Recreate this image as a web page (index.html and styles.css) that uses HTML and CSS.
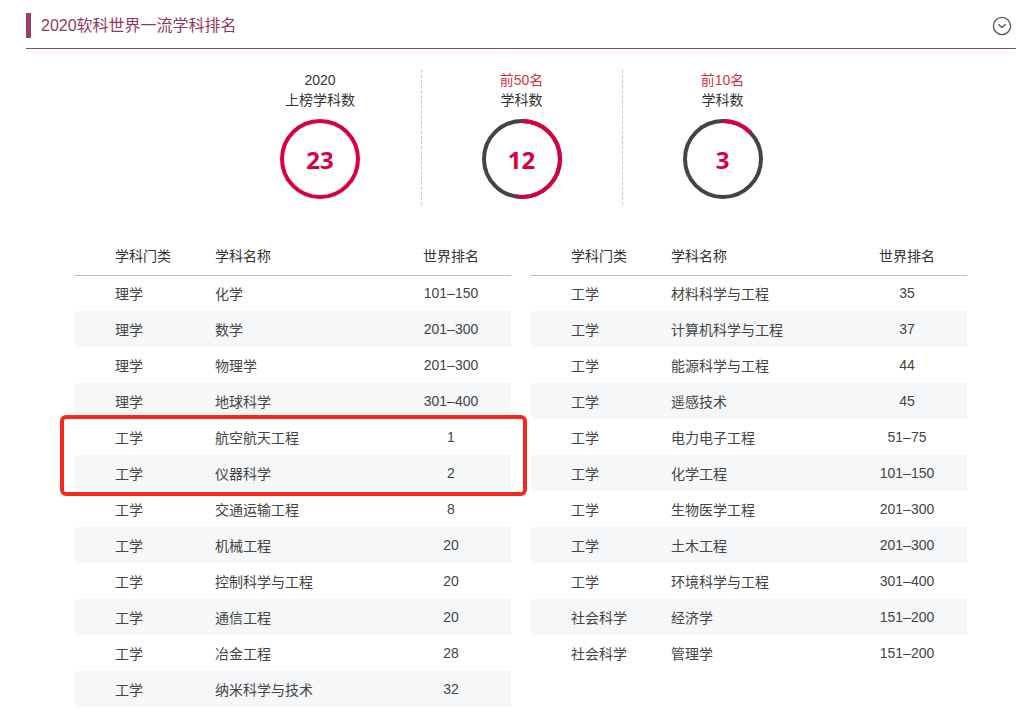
FILE: index.html
```html
<!DOCTYPE html>
<html lang="zh">
<head>
<meta charset="utf-8">
<link rel="stylesheet" href="styles.css">
</head>
<body>
<div class="page">
  <div class="header">
    <span class="bar"></span>
    <h1 class="title">2020软科世界一流学科排名</h1>
    <svg class="toggle" width="20" height="20" viewBox="0 0 20 20"><circle cx="10" cy="10" r="8.6" fill="none" stroke="#555" stroke-width="1.3"/><path d="M6.6 8.6 L10 11.6 L13.4 8.6" fill="none" stroke="#555" stroke-width="1.3" stroke-linecap="round" stroke-linejoin="round"/></svg>
  </div>

  <div class="stats">
    <div class="stat">
      <div class="label">2020</div>
      <div class="label">上榜学科数</div>
      <div class="ring">
        <svg width="80" height="80" viewBox="0 0 80 80"><circle cx="40" cy="40" r="38" fill="none" stroke="#d9003f" stroke-width="4"/></svg>
        <span class="num">23</span>
      </div>
    </div>
    <div class="stat sep">
      <div class="label red">前50名</div>
      <div class="label">学科数</div>
      <div class="ring">
        <svg width="80" height="80" viewBox="0 0 80 80"><circle cx="40" cy="40" r="38" fill="none" stroke="#444" stroke-width="4"/><circle cx="40" cy="40" r="38" fill="none" stroke="#d9003f" stroke-width="4" pathLength="100" stroke-dasharray="52.2 100" transform="rotate(-90 40 40)"/></svg>
        <span class="num">12</span>
      </div>
    </div>
    <div class="stat sep">
      <div class="label red">前10名</div>
      <div class="label">学科数</div>
      <div class="ring">
        <svg width="80" height="80" viewBox="0 0 80 80"><circle cx="40" cy="40" r="38" fill="none" stroke="#444" stroke-width="4"/><circle cx="40" cy="40" r="38" fill="none" stroke="#d9003f" stroke-width="4" pathLength="100" stroke-dasharray="13 100" transform="rotate(-90 40 40)"/></svg>
        <span class="num">3</span>
      </div>
    </div>
  </div>

  <div class="tables">
    <table class="rank">
      <thead><tr><th class="c1">学科门类</th><th class="c2">学科名称</th><th class="c3">世界排名</th></tr></thead>
      <tbody>
        <tr><td class="c1">理学</td><td class="c2">化学</td><td class="c3">101–150</td></tr>
        <tr><td class="c1">理学</td><td class="c2">数学</td><td class="c3">201–300</td></tr>
        <tr><td class="c1">理学</td><td class="c2">物理学</td><td class="c3">201–300</td></tr>
        <tr><td class="c1">理学</td><td class="c2">地球科学</td><td class="c3">301–400</td></tr>
        <tr><td class="c1">工学</td><td class="c2">航空航天工程</td><td class="c3">1</td></tr>
        <tr><td class="c1">工学</td><td class="c2">仪器科学</td><td class="c3">2</td></tr>
        <tr><td class="c1">工学</td><td class="c2">交通运输工程</td><td class="c3">8</td></tr>
        <tr><td class="c1">工学</td><td class="c2">机械工程</td><td class="c3">20</td></tr>
        <tr><td class="c1">工学</td><td class="c2">控制科学与工程</td><td class="c3">20</td></tr>
        <tr><td class="c1">工学</td><td class="c2">通信工程</td><td class="c3">20</td></tr>
        <tr><td class="c1">工学</td><td class="c2">冶金工程</td><td class="c3">28</td></tr>
        <tr><td class="c1">工学</td><td class="c2">纳米科学与技术</td><td class="c3">32</td></tr>
      </tbody>
    </table>
    <table class="rank">
      <thead><tr><th class="c1">学科门类</th><th class="c2">学科名称</th><th class="c3">世界排名</th></tr></thead>
      <tbody>
        <tr><td class="c1">工学</td><td class="c2">材料科学与工程</td><td class="c3">35</td></tr>
        <tr><td class="c1">工学</td><td class="c2">计算机科学与工程</td><td class="c3">37</td></tr>
        <tr><td class="c1">工学</td><td class="c2">能源科学与工程</td><td class="c3">44</td></tr>
        <tr><td class="c1">工学</td><td class="c2">遥感技术</td><td class="c3">45</td></tr>
        <tr><td class="c1">工学</td><td class="c2">电力电子工程</td><td class="c3">51–75</td></tr>
        <tr><td class="c1">工学</td><td class="c2">化学工程</td><td class="c3">101–150</td></tr>
        <tr><td class="c1">工学</td><td class="c2">生物医学工程</td><td class="c3">201–300</td></tr>
        <tr><td class="c1">工学</td><td class="c2">土木工程</td><td class="c3">201–300</td></tr>
        <tr><td class="c1">工学</td><td class="c2">环境科学与工程</td><td class="c3">301–400</td></tr>
        <tr><td class="c1">社会科学</td><td class="c2">经济学</td><td class="c3">151–200</td></tr>
        <tr><td class="c1">社会科学</td><td class="c2">管理学</td><td class="c3">151–200</td></tr>
      </tbody>
    </table>
    <div class="highlight"></div>
  </div>
</div>
</body>
</html>
```

FILE: styles.css
```css
* { box-sizing: border-box; }
html, body { margin: 0; padding: 0; background: #fff; }
body {
  font-family: "Liberation Sans", "Noto Sans CJK SC", sans-serif;
  color: #333;
  width: 1032px;
  height: 728px;
  overflow: hidden;
}
.page {
  position: relative;
  margin-left: 26px;
  width: 990px;
}
.header {
  height: 49px;
  border-bottom: 1px solid #8a4a69;
  display: flex;
  align-items: flex-start;
  padding-top: 13px;
}
.bar {
  width: 5px;
  height: 25px;
  background: #9c3f66;
  flex: none;
}
.title {
  margin: 0 0 0 10px;
  font-size: 16px;
  font-weight: normal;
  line-height: 26px;
  color: #8f3a60;
  flex: 1;
}
.toggle {
  margin-top: 3px;
  margin-right: 4px;
}
.stats {
  display: flex;
  justify-content: center;
  margin-top: 21px;
}
.stat {
  width: 201px;
  height: 135px;
  display: flex;
  flex-direction: column;
  align-items: center;
}
.sep { border-left: 1px dashed #c4c4c4; }
.label {
  font-size: 14px;
  line-height: 20px;
  color: #333;
}
.label.red { color: #d9303f; }
.ring {
  position: relative;
  width: 80px;
  height: 80px;
  margin-top: 9px;
  display: flex;
  align-items: center;
  justify-content: center;
}
.ring svg { position: absolute; left: 0; top: 0; }
.num {
  position: relative;
  font-size: 24px;
  font-weight: bold;
  color: #d9003f;
  font-family: "Open Sans", "Liberation Sans", sans-serif;
}
.tables {
  display: flex;
  gap: 20px;
  margin-top: 30px;
  margin-left: 49px;
  align-items: flex-start;
}
.rank {
  width: 436px;
  border-collapse: collapse;
  table-layout: fixed;
  font-size: 14px;
}
.rank + .rank { width: 435px; }
.rank th {
  font-weight: normal;
  height: 40px;
  padding: 0;
  border-bottom: 1px solid #bdbdbd;
  color: #333;
}
.rank td {
  height: 36px;
  padding: 0;
  color: #444;
}
.c1 { width: 140px; padding-left: 40px !important; text-align: left; }
.c2 { width: 176px; text-align: left; }
.c3 { width: 120px; text-align: center; }
.rank tbody tr:nth-child(even) td { background: #f5f7f8; }
.highlight {
  position: absolute;
  left: 34px;
  top: 415px;
  width: 467px;
  height: 81px;
  border: 4px solid #f52a1c;
  border-radius: 6px;
}
```
